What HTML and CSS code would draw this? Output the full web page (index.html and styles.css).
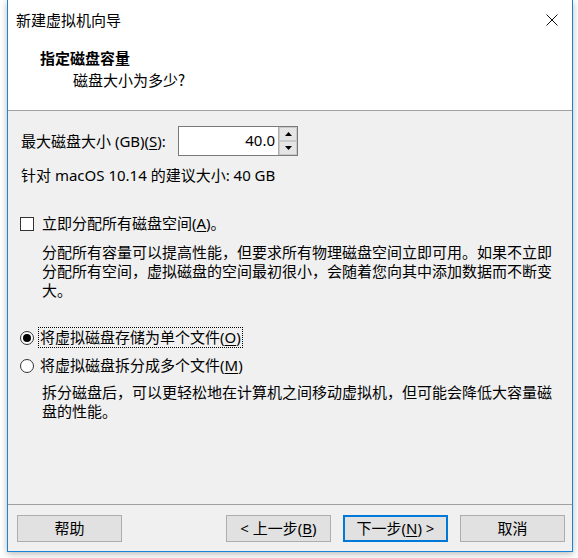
FILE: index.html
```html
<!DOCTYPE html>
<html lang="zh-CN">
<head>
<meta charset="utf-8">
<title>新建虚拟机向导</title>
<link rel="stylesheet" href="styles.css">
</head>
<body>
<div class="window">
  <div class="titlebar">
    <span class="title">新建虚拟机向导</span>
    <svg class="close" width="12" height="12" viewBox="0 0 12 12"><path d="M0.5 0.5L11.5 11.5M11.5 0.5L0.5 11.5" stroke="#111" stroke-width="1" fill="none"/></svg>
  </div>
  <div class="header">
    <div class="h-title">指定磁盘容量</div>
    <div class="h-sub">磁盘大小为多少?</div>
  </div>
  <div class="content">
    <div class="size-row">
      <span class="lbl">最大磁盘大小 (GB)(<u>S</u>):</span>
      <div class="spin">
        <span class="spin-val">40.0</span>
        <div class="spin-btns">
          <div class="spin-btn"><svg width="7" height="4" viewBox="0 0 7 4"><path d="M3.5 0L7 4H0Z" fill="#000"/></svg></div>
          <div class="spin-btn"><svg width="7" height="4" viewBox="0 0 7 4"><path d="M0 0H7L3.5 4Z" fill="#000"/></svg></div>
        </div>
      </div>
    </div>
    <div class="rec">针对 macOS 10.14 的建议大小: 40 GB</div>

    <div class="opt opt-check">
      <span class="checkbox"></span>
      <span class="opt-lbl">立即分配所有磁盘空间(<u>A</u>)。</span>
    </div>
    <p class="desc">分配所有容量可以提高性能，但要求所有物理磁盘空间立即可用。如果不立即分配所有空间，虚拟磁盘的空间最初很小，会随着您向其中添加数据而不断变大。</p>

    <div class="opt opt-radio1">
      <span class="radio checked"></span>
      <span class="opt-lbl focus">将虚拟磁盘存储为单个文件(<u>O</u>)</span>
    </div>
    <div class="opt opt-radio2">
      <span class="radio"></span>
      <span class="opt-lbl">将虚拟磁盘拆分成多个文件(<u>M</u>)</span>
    </div>
    <p class="desc desc2">拆分磁盘后，可以更轻松地在计算机之间移动虚拟机，但可能会降低大容量磁盘的性能。</p>
  </div>
  <div class="footer">
    <button class="btn">帮助</button>
    <div class="spacer"></div>
    <button class="btn">&lt; 上一步(<u>B</u>)</button>
    <button class="btn default">下一步(<u>N</u>) &gt;</button>
    <button class="btn">取消</button>
  </div>
</div>
</body>
</html>
```
FILE: styles.css
```css
* { box-sizing: border-box; }
html, body {
  margin: 0;
  padding: 0;
  background: #ffffff;
}
body {
  font-family: "Noto Sans", "Noto Sans CJK SC", sans-serif;
  font-size: 15px;
  color: #000;
  width: 578px;
  height: 558px;
  overflow: hidden;
}
.window {
  margin-left: 7px;
  width: 566px;
  height: 552px;
  border: 1px solid #1883d7;
  border-top: none;
  display: flex;
  flex-direction: column;
  background: #f0f0f0;
  box-shadow: 0 2px 7px rgba(0, 0, 0, 0.28);
}
.titlebar {
  height: 40px;
  background: #fff;
  display: flex;
  align-items: center;
  justify-content: space-between;
  padding: 0 14px 0 8px;
  line-height: 20px;
}
.title { font-family: "Noto Sans CJK SC", sans-serif; }
.header {
  height: 71px;
  background: #fff;
  border-bottom: 1px solid #a0a0a0;
  padding-top: 8px;
  line-height: 20px;
}
.h-title {
  padding-left: 32px;
  font-weight: bold;
  font-family: "Noto Sans CJK SC", sans-serif;
}
.h-sub {
  padding-left: 65px;
  margin-top: 2px;
  font-family: "Noto Sans CJK SC", sans-serif;
}
.content {
  flex: 1;
  padding: 15px 0 0 13px;
  line-height: 20px;
}
.size-row {
  display: flex;
  align-items: center;
  height: 30px;
}
.lbl { width: 157px; }
.spin {
  width: 120px;
  height: 30px;
  border: 1px solid #7a7a7a;
  background: #fff;
  display: flex;
}
.spin-val {
  flex: 1;
  text-align: right;
  padding-right: 3px;
  line-height: 27px;
}
.spin-btns {
  width: 19px;
  display: flex;
  flex-direction: column;
  border-left: 1px solid #adadad;
}
.spin-btn {
  flex: 1;
  background: #e5e5e5;
  border: 1px solid #c9c9c9;
  display: flex;
  align-items: center;
  justify-content: center;
}
.rec { margin-top: 9px; }
.opt {
  display: flex;
  align-items: center;
  height: 21px;
}
.opt-check { margin-top: 28px; margin-left: -1px; }
.checkbox {
  width: 14px;
  height: 14px;
  border: 1px solid #333;
  background: #fff;
  margin-right: 6px;
}
.desc {
  margin: 8px 0 0 21px;
  width: 520px;
  line-height: 19px;
  font-family: "Noto Sans CJK SC", sans-serif;
}
.desc2 { margin-top: 7px; line-height: 18.5px; }
.opt-radio1 { margin-top: 28px; margin-left: -1px; }
.opt-radio2 { margin-top: 7px; margin-left: -1px; }
.radio {
  width: 14px;
  height: 14px;
  border: 1px solid #333;
  border-radius: 50%;
  background: #fff;
  margin-right: 4px;
  position: relative;
}
.radio.checked::after {
  content: "";
  position: absolute;
  left: 2px;
  top: 2px;
  width: 8px;
  height: 8px;
  border-radius: 50%;
  background: #000;
}
.opt-lbl { padding: 0 1px; border: 1px dotted transparent; line-height: 19px; }
.opt-lbl.focus { border-color: #000; }
.footer {
  height: 47px;
  border-top: 1px solid #a0a0a0;
  display: flex;
  align-items: flex-start;
  padding: 10px 7px 0 9px;
  gap: 12px;
}
.spacer { flex: 1; }
.btn {
  width: 105px;
  height: 27px;
  background: #e1e1e1;
  border: 1px solid #adadad;
  font-family: "Noto Sans", "Noto Sans CJK SC", sans-serif;
  font-size: 15px;
  color: #000;
  padding: 0;
  line-height: 23px;
}
.btn.default { border: 2px solid #0078d7; }
u { text-decoration-thickness: 1px; text-underline-offset: 2px; }
```
